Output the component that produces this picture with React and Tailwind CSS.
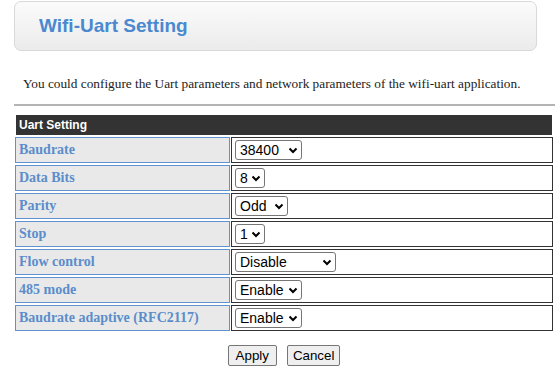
import { useState } from 'react';

const rows = [
  { label: 'Baudrate', value: '38400', options: ['9600', '19200', '38400', '57600', '115200'], w: 'w-[67px]' },
  { label: 'Data Bits', value: '8', options: ['7', '8'], w: 'w-[30px]' },
  { label: 'Parity', value: 'Odd', options: ['None', 'Odd', 'Even'], w: 'w-[53px]' },
  { label: 'Stop', value: '1', options: ['1', '2'], w: 'w-[30px]' },
  { label: 'Flow control', value: 'Disable', options: ['Disable', 'Enable'], w: 'w-[101px]' },
  { label: '485 mode', value: 'Enable', options: ['Disable', 'Enable'], w: 'w-[67px]' },
  { label: 'Baudrate adaptive (RFC2117)', value: 'Enable', options: ['Disable', 'Enable'], w: 'w-[67px]' },
];

function Select({ value, options, w }) {
  const [v, setV] = useState(value);
  return (
    <div className={`relative h-[20px] ${w}`}>
      <select
        value={v}
        onChange={e => setV(e.target.value)}
        className="block appearance-none w-full h-[20px] py-0 leading-[18px] border border-[#767676] rounded-[3px] bg-white pl-[4px] text-[14px] text-black font-['Liberation_Sans',Arial,sans-serif] outline-none"
      >
        {options.map(o => <option key={o} value={o}>{o}</option>)}
      </select>
      <svg className="absolute right-[4px] top-[7px] w-[10px] h-[7px] pointer-events-none" viewBox="0 0 10 7">
        <polyline points="1.5,1.5 5,5 8.5,1.5" fill="none" stroke="#000" strokeWidth="2" strokeLinejoin="miter" />
      </svg>
    </div>
  );
}

export default function App() {
  return (
    <div className="w-[558px] h-[378px] bg-white overflow-hidden flex flex-col">
      <div className="mt-[1px] ml-[14px] w-[523px] h-[50px] rounded-[7px] border border-[#d9d9d9] bg-gradient-to-b from-[#fbfbfb] to-[#ebebeb] flex items-center pl-[24px]">
        <h1 className="text-[19px] font-bold text-[#4a89cf] font-['Liberation_Sans',Arial,sans-serif]">Wifi-Uart Setting</h1>
      </div>

      <p className="mt-[25px] ml-[23px] text-[13.3px] leading-[15px] text-[#222] font-['Liberation_Serif','Times_New_Roman',serif]">
        You could configure the Uart parameters and network parameters of the wifi-uart application.
      </p>

      <div className="mt-[13px] ml-[14px] w-[541px] h-[2px] bg-[#b4b4b4]" />

      <div className="mt-[9px] ml-[15px] w-[538px] flex flex-col gap-[2px]">
        <div className="mx-[1px] h-[20px] bg-[#333333] flex items-center pl-[3px] text-[12px] font-bold text-white font-['Liberation_Sans',Arial,sans-serif]">
          Uart Setting
        </div>
        {rows.map(r => (
          <div key={r.label} className="flex gap-[1px] h-[26px]">
            <div className="w-[215px] border border-[#5f92d0] bg-[#e9e9e9] flex items-center pl-[3px] text-[14px] leading-[16px] font-bold text-[#5b8dcb] font-['Liberation_Serif','Times_New_Roman',serif]">
              {r.label}
            </div>
            <div className="w-[322px] border border-[#333333] bg-white flex items-center pl-[3px]">
              <Select value={r.value} options={r.options} w={r.w} />
            </div>
          </div>
        ))}
      </div>

      <div className="mt-[14px] ml-[15px] w-[538px] flex justify-center gap-[10px] font-['Liberation_Sans',Arial,sans-serif] text-[13.33px] text-black">
        <button className="h-[21px] px-[7px] border border-[#767676] rounded-[2px] bg-[#efefef]">Apply</button>
        <button className="h-[21px] px-[5px] border border-[#767676] rounded-[2px] bg-[#efefef]">Cancel</button>
      </div>
    </div>
  );
}
